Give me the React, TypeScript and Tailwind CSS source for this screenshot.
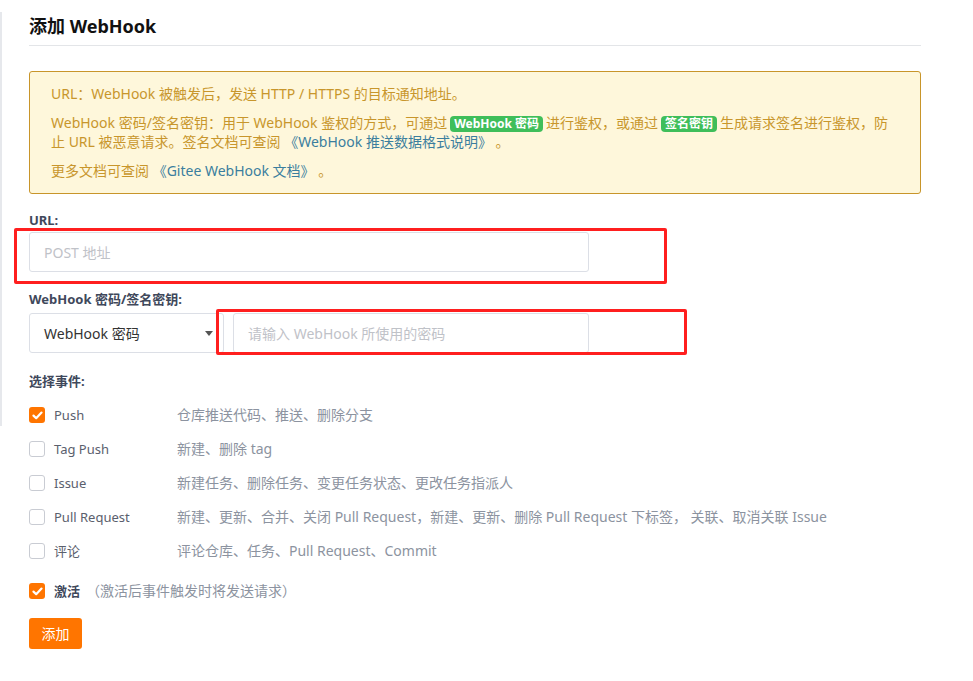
const EVENTS = [
  { id: 'push', name: 'Push', desc: '仓库推送代码、推送、删除分支', checked: true },
  { id: 'tag', name: 'Tag Push', desc: '新建、删除 tag', checked: false },
  { id: 'issue', name: 'Issue', desc: '新建任务、删除任务、变更任务状态、更改任务指派人', checked: false },
  {
    id: 'pr',
    name: 'Pull Request',
    desc: '新建、更新、合并、关闭 Pull Request，新建、更新、删除 Pull Request 下标签， 关联、取消关联 Issue',
    checked: false,
  },
  { id: 'note', name: '评论', desc: '评论仓库、任务、Pull Request、Commit', checked: false },
];

function Checkbox({ checked }: { checked: boolean }) {
  if (checked) {
    return (
      <span className="w-4 h-4 rounded-[3px] bg-[#ff7500] flex items-center justify-center shrink-0">
        <svg width="11" height="9" viewBox="0 0 11 9" fill="none">
          <path d="M1.5 4.6 L4.2 7.2 L9.5 1.6" stroke="white" strokeWidth="2.2" strokeLinecap="round" strokeLinejoin="round" />
        </svg>
      </span>
    );
  }
  return <span className="w-4 h-4 rounded-[3px] bg-white border border-[#c9ccd3] shrink-0" />;
}

function Badge({ children }: { children: React.ReactNode }) {
  return (
    <span className="inline-block bg-[#3fbe5a] text-white font-bold text-[12px] leading-[16px] px-[4px] rounded-[4px] mx-[3px]">
      {children}
    </span>
  );
}

export default function App() {
  return (
    <div
      className="relative w-[973px] h-[681px] bg-white overflow-hidden text-[#40485b]"
      style={{ fontFamily: '"Noto Sans", "Noto Sans CJK SC", sans-serif' }}
    >
      {/* left edge of the side panel */}
      <div className="absolute left-0 top-[12px] w-[2px] h-[414px] bg-[#e6e8ec]" />

      <div className="pl-[29px] w-[921px]">
        {/* Title */}
        <div className="pt-[14px] pb-[7px] border-b border-[#e3e5e8]">
          <h2 className="text-[18px] leading-[24px] font-bold text-[#111]">添加 WebHook</h2>
        </div>

        {/* Notice */}
        <div className="mt-[25px] border border-[#c8952a] bg-[#fef7db] rounded-[3px] px-[21px] pt-[12px] pb-[12px] text-[14px] text-[#c8962c]">
          <p className="leading-[20px]">URL：WebHook 被触发后，发送 HTTP / HTTPS 的目标通知地址。</p>
          <p className="leading-[19px] mt-[9px]">
            WebHook 密码/签名密钥：用于 WebHook 鉴权的方式，可通过<Badge>WebHook 密码</Badge>进行鉴权，或通过
            <Badge>签名密钥</Badge>生成请求签名进行鉴权，防止 URL 被恶意请求。签名文档可查阅
            <span className="text-[#3b7e9e]"> 《WebHook 推送数据格式说明》</span> 。
          </p>
          <p className="leading-[20px] mt-[10px]">
            更多文档可查阅 <span className="text-[#3b7e9e]">《Gitee WebHook 文档》</span> 。
          </p>
        </div>

        {/* URL */}
        <div className="mt-[17px] text-[13px] leading-[18px] font-bold">URL:</div>
        <div className="mt-[3px] w-[560px] h-[40px] border border-[#dcdfe6] rounded-[3px] flex items-center px-[14px] text-[14px] text-[#bfc2c8]">
          POST 地址
        </div>

        {/* Secret */}
        <div className="mt-[18px] text-[13px] leading-[18px] font-bold">WebHook 密码/签名密钥:</div>
        <div className="mt-[5px] flex gap-[9px]">
          <div className="w-[195px] h-[40px] border border-[#dcdfe6] rounded-[3px] flex items-center justify-between pl-[14px] pr-[10px] text-[14px] text-[#333]">
            <span>WebHook 密码</span>
            <svg width="8" height="5" viewBox="0 0 8 5">
              <path d="M0 0 H8 L4 5 Z" fill="#555" />
            </svg>
          </div>
          <div className="w-[356px] h-[40px] border border-[#dcdfe6] rounded-[3px] flex items-center px-[14px] text-[14px] text-[#bfc2c8]">
            请输入 WebHook 所使用的密码
          </div>
        </div>

        {/* Events */}
        <div className="mt-[19px] text-[13px] leading-[18px] font-bold">选择事件:</div>
        <div className="mt-[8px] flex flex-col">
          {EVENTS.map((ev) => (
            <div key={ev.id} className="h-[34px] flex items-center">
              <Checkbox checked={ev.checked} />
              <span className="ml-[9px] w-[123px] text-[13px] leading-[20px] text-[#5a606d]">{ev.name}</span>
              <span className="text-[14px] leading-[20px] text-[#8c93a0]">{ev.desc}</span>
            </div>
          ))}
        </div>

        <div className="mt-[6px] h-[34px] flex items-center">
          <Checkbox checked />
          <span className="ml-[9px] text-[13px] leading-[20px] font-bold text-[#40485b]">激活</span>
          <span className="ml-[6px] text-[14px] leading-[20px] text-[#8c93a0]">（激活后事件触发时将发送请求）</span>
        </div>

        <button className="mt-[10px] w-[53px] h-[31px] bg-[#ff7500] rounded-[3px] text-white text-[14px] flex items-center justify-center">
          添加
        </button>
      </div>

      {/* annotation boxes */}
      <div className="absolute left-[14px] top-[228px] w-[653px] h-[56px] border-[3px] border-[#ff1f1f] rounded-[2px]" />
      <div className="absolute left-[216px] top-[309px] w-[471px] h-[46px] border-[3px] border-[#ff1f1f] rounded-[2px]" />
    </div>
  );
}
